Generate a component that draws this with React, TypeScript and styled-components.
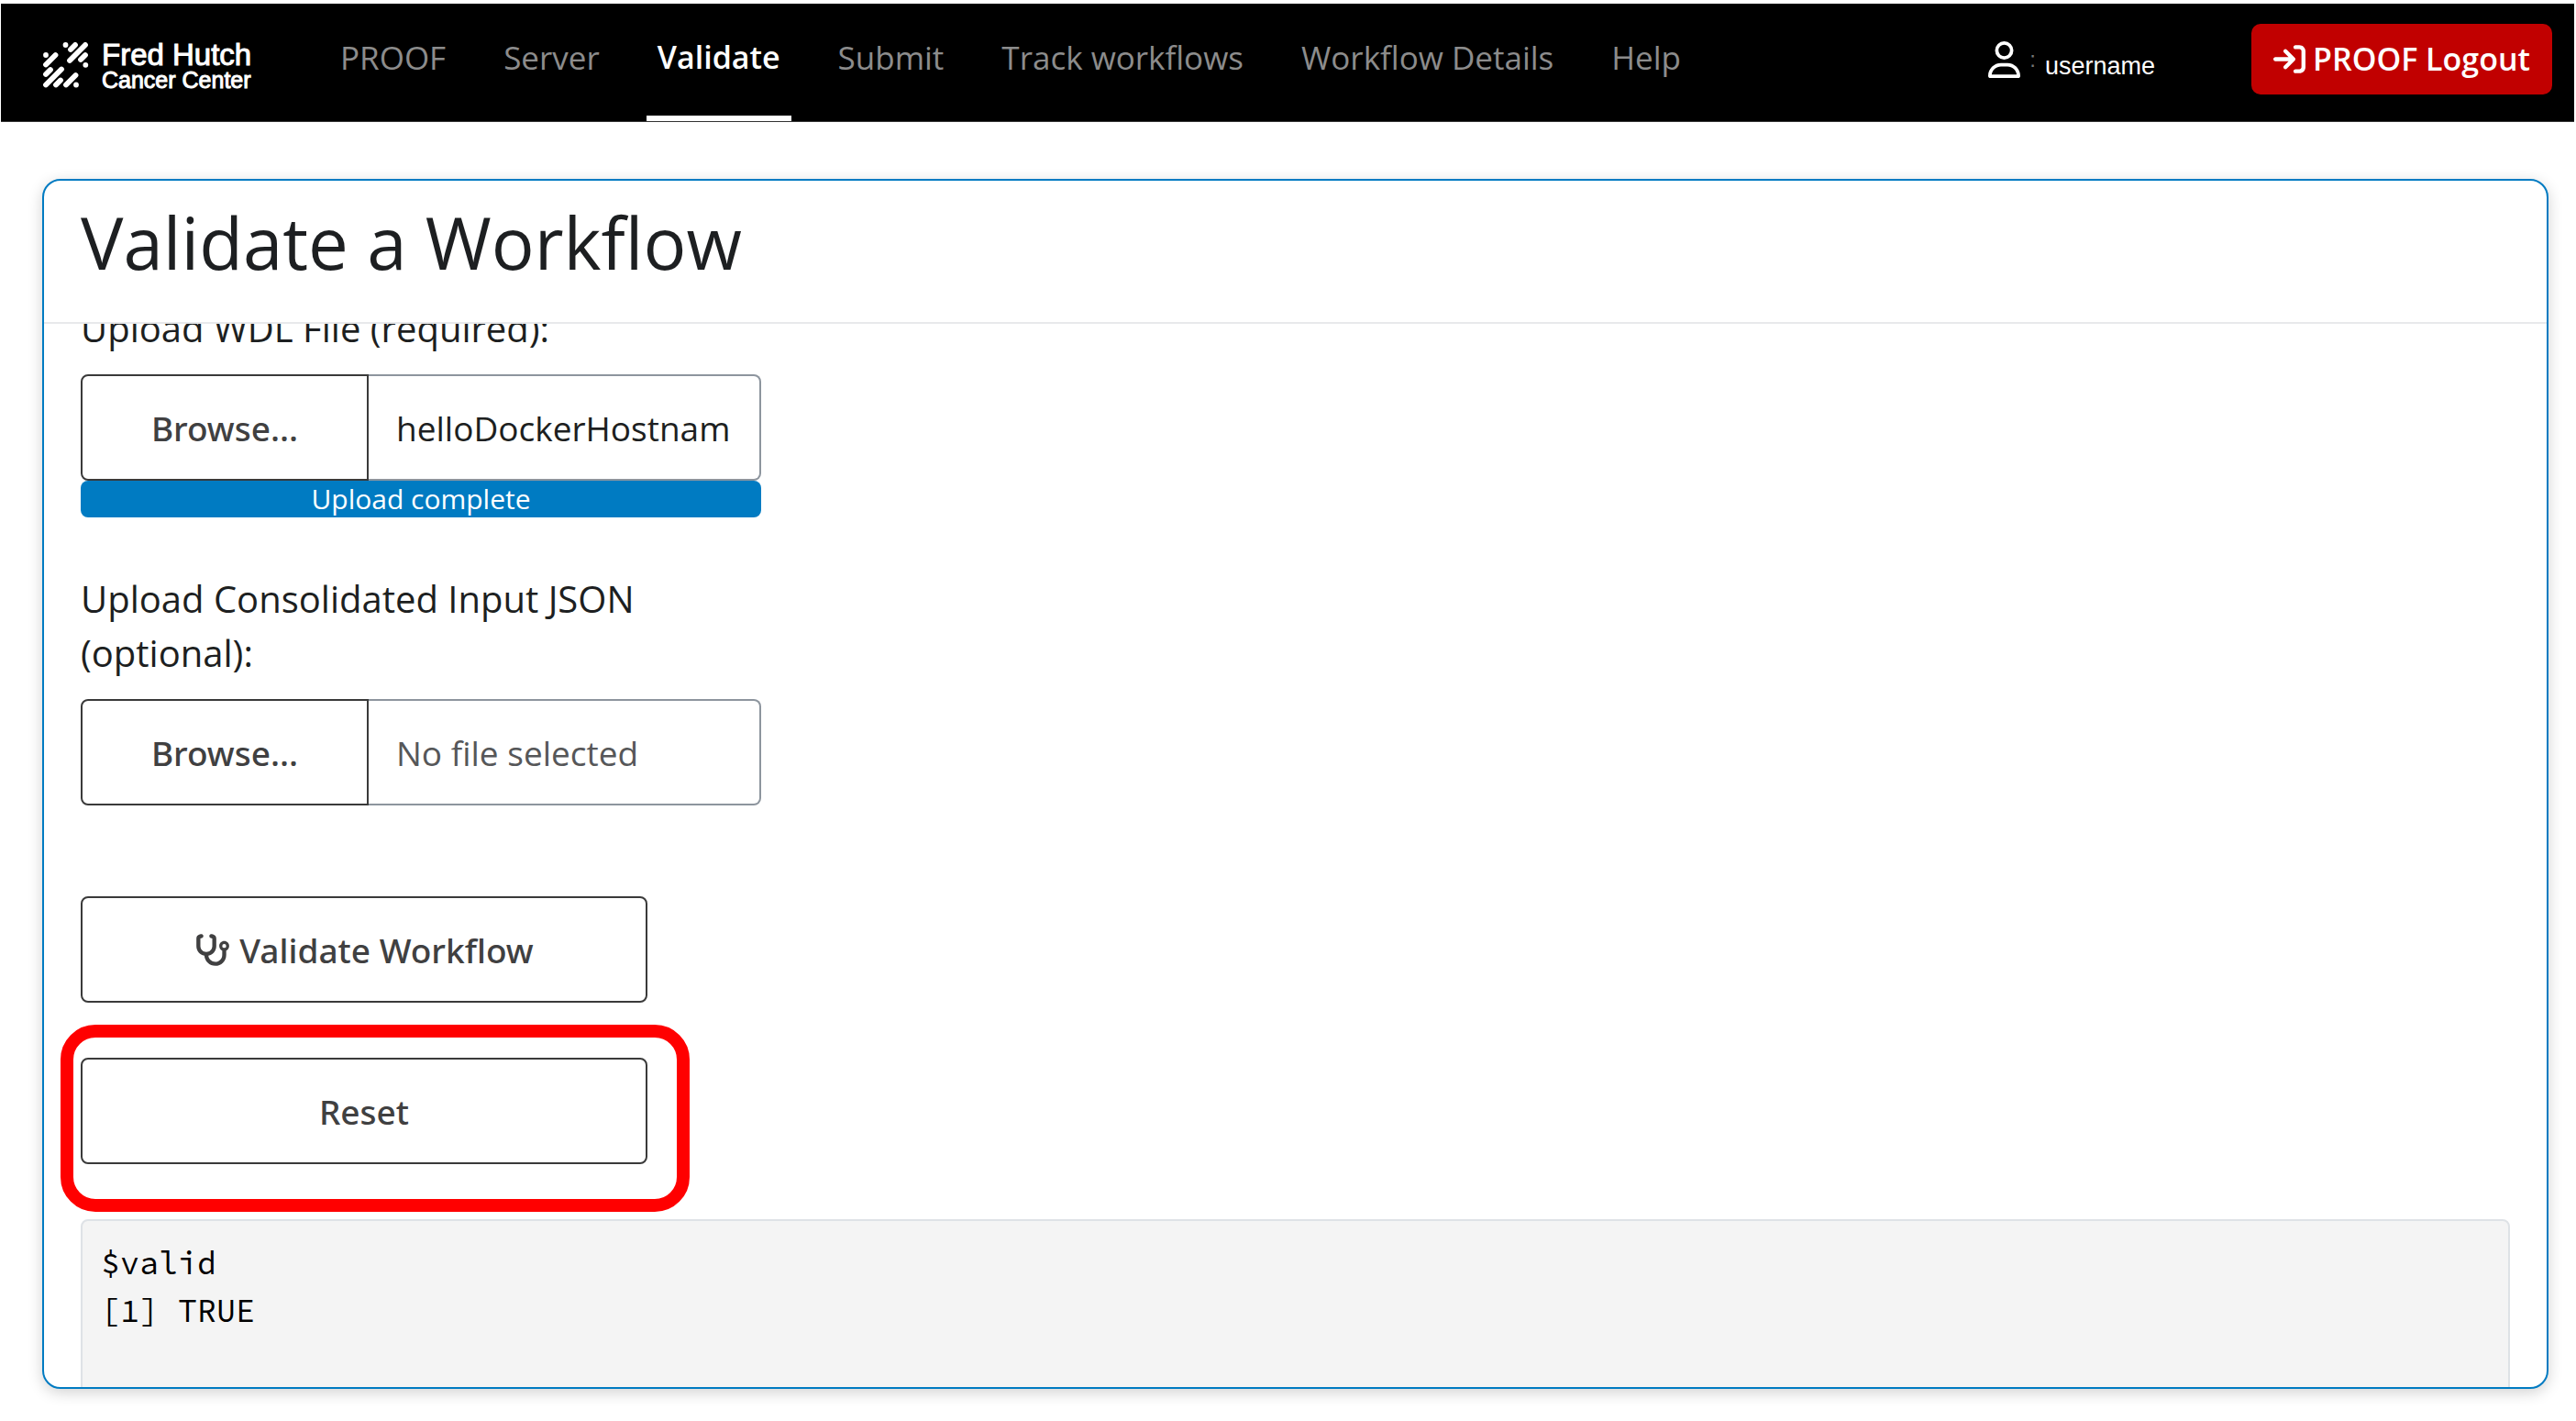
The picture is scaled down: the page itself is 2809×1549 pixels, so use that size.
import React, { useLayoutEffect, useRef } from "react";
import styled, { createGlobalStyle } from "styled-components";
import {
  FaArrowRightToBracket,
  FaRegUser,
  FaStethoscope,
} from "react-icons/fa6";

const color = {
  text: "#1d1f21",
  primary: "#007bc2",
  danger: "#c10000",
  dark: "#404041",
  outline: "#3a3a3a",
  field: "#8d959e",
};

const GlobalStyle = createGlobalStyle`
  *, *::before, *::after { box-sizing: border-box; }
  body {
    margin: 0;
    background: #fff;
    color: ${color.text};
    font-family: "Open Sans", "Noto Sans", sans-serif;
    font-size: 40px;
    line-height: 59px;
  }
  button, input { font-family: inherit; }
`;

const Page = styled.div`
  display: flex;
  flex-direction: column;
  height: 100vh;
  padding: 4px 2px 35px 1px;
`;

const TopBar = styled.header`
  display: flex;
  align-items: stretch;
  flex: none;
  background: #000;
  border-bottom: 1px solid #333;
  color: #fff;
`;

const Brand = styled.a`
  display: flex;
  align-items: flex-start;
  gap: 14px;
  width: 311px;
  padding: 39px 0 0 46px;
  color: #fff;
  text-decoration: none;
`;

const BrandMark = styled.svg`
  flex: none;
  width: 50px;
  height: 50px;
  margin-top: 3px;
`;

const BrandName = styled.span`
  display: flex;
  flex-direction: column;
  font-family: "Liberation Sans", Arial, sans-serif;
  white-space: nowrap;
  -webkit-text-stroke: 1px #fff;
`;

const BrandLine = styled.span<{ $small?: boolean }>`
  font-size: ${(p) => (p.$small ? 25 : 33)}px;
  line-height: ${(p) => (p.$small ? 20 : 34)}px;
`;

const Nav = styled.nav`
  display: flex;
  gap: 39px;
  margin-left: 47px;
`;

const NavLink = styled.a<{ $active?: boolean }>`
  padding: 32px 12px 37px;
  border-bottom: 6px solid ${(p) => (p.$active ? "#fff" : "transparent")};
  color: ${(p) => (p.$active ? "#fff" : "#8c8c8c")};
  font-size: ${(p) => (p.$active ? 34 : 35)}px;
  font-weight: ${(p) => (p.$active ? 600 : 400)};
  line-height: 53px;
  text-decoration: none;
  white-space: nowrap;
`;

const Account = styled.div`
  display: flex;
  align-items: flex-start;
  margin-left: auto;
  padding: 22px 24px 0 0;
`;

const User = styled.div`
  display: flex;
  align-items: center;
  gap: 10px;
  margin-right: 105px;
  padding-top: 12px;
  font-family: "Liberation Sans", Arial, sans-serif;
  font-size: 27px;
  line-height: 40px;

  svg {
    width: 35px;
    height: 40px;
  }
`;

const Colon = styled.span`
  color: #777;
  font-size: 24px;
`;

const UserName = styled.span`
  padding-top: 14px;
`;

const Logout = styled.button`
  display: flex;
  align-items: center;
  gap: 8px;
  padding: 12px 24px;
  border: 0;
  border-radius: 10px;
  background: ${color.danger};
  color: #fff;
  font-size: 34px;
  font-weight: 600;
  line-height: 53px;
  white-space: nowrap;

  svg {
    width: 35px;
    height: 35px;
  }
`;

const Card = styled.main`
  display: flex;
  flex: 1;
  flex-direction: column;
  min-height: 0;
  margin: 62px 28px 0 45px;
  overflow: hidden;
  border: 2px solid ${color.primary};
  border-radius: 20px;
  background: #fff;
  box-shadow: 0 4px 16px rgba(0, 0, 0, 0.18);
`;

const CardHeader = styled.div`
  flex: none;
  padding: 20px 40px 39px;
  border-bottom: 2px solid #e8e9eb;
`;

const Title = styled.h1`
  margin: 0;
  font-size: 78px;
  font-weight: 400;
  line-height: 95px;
`;

const CardBody = styled.div`
  flex: 1;
  min-height: 0;
  padding: 40px;
  overflow-y: auto;
  scrollbar-width: none;
`;

const Field = styled.div`
  width: 742px;
  margin-bottom: 59px;
`;

const FieldLabel = styled.label`
  display: block;
  margin-bottom: 21px;
`;

const FileGroup = styled.div`
  display: flex;
  height: 116px;
`;

const Browse = styled.label`
  display: flex;
  flex: none;
  align-items: center;
  justify-content: center;
  width: 314px;
  border: 2px solid ${color.outline};
  border-radius: 8px 0 0 8px;
  color: ${color.dark};
  font-family: "Noto Sans", "Open Sans", sans-serif;
  font-size: 37px;
  font-weight: 500;
`;

const HiddenFile = styled.input`
  position: absolute;
  width: 1px;
  height: 1px;
  opacity: 0;
`;

const FileName = styled.input`
  flex: 1;
  min-width: 0;
  padding: 0 30px;
  border: 2px solid ${color.field};
  border-left: 0;
  border-radius: 0 8px 8px 0;
  background: #fff;
  color: ${color.text};
  font-size: 37px;

  &::placeholder {
    color: #565759;
    opacity: 1;
  }
`;

const Progress = styled.div`
  border-radius: 8px;
  background: ${color.primary};
  color: #fff;
  font-size: 30px;
  line-height: 40px;
  text-align: center;
`;

const Actions = styled.div`
  display: flex;
  flex-direction: column;
  gap: 60px;
  width: 618px;
  margin: 99px 0 60px;
`;

const Action = styled.button`
  display: flex;
  align-items: center;
  justify-content: center;
  gap: 10px;
  width: 100%;
  height: 116px;
  border: 2px solid ${color.outline};
  border-radius: 8px;
  background: #fff;
  color: ${color.dark};
  font-family: "Noto Sans", "Open Sans", sans-serif;
  font-size: 37px;
  font-weight: 500;

  svg {
    width: 39px;
    height: 37px;
  }
`;

const Highlighted = styled.div`
  position: relative;
`;

const Marker = styled.div`
  position: absolute;
  inset: -36px -46px -52px -22px;
  border: 14px solid #f00;
  border-radius: 38px;
  pointer-events: none;
`;

const Output = styled.pre`
  min-height: 320px;
  margin: 0;
  padding: 20px;
  border: 2px solid #dee2e6;
  border-radius: 8px;
  background: #f4f4f4;
  color: #000;
  font-family: "Source Code Pro", "Liberation Mono", monospace;
  font-size: 35px;
  line-height: 52px;
`;

const dashes: [number, number, number, number][] = [
  [3, 14, 3, 14],
  [13.5, 14, 3, 24.5],
  [24.5, 3, 24.5, 3],
  [35, 3, 30, 8],
  [46, 3, 29, 20],
  [46, 14, 41, 19],
  [46.3, 24.8, 46.3, 24.8],
  [8, 30, 3, 35],
  [20, 29.5, 3, 46.5],
  [19, 41.5, 14, 46.5],
  [35.5, 36, 25, 46.5],
  [36, 46.5, 36, 46.5],
];

const pages = [
  "PROOF",
  "Server",
  "Validate",
  "Submit",
  "Track workflows",
  "Workflow Details",
  "Help",
];

type FileFieldProps = {
  id: string;
  label: string;
  value?: string;
  done?: boolean;
};

function FileField({ id, label, value = "", done }: FileFieldProps) {
  return (
    <Field>
      <FieldLabel htmlFor={`${id}-name`}>{label}</FieldLabel>
      <FileGroup>
        <Browse>
          Browse...
          <HiddenFile type="file" id={id} />
        </Browse>
        <FileName
          id={`${id}-name`}
          type="text"
          readOnly
          value={value}
          placeholder="No file selected"
        />
      </FileGroup>
      {done && <Progress>Upload complete</Progress>}
    </Field>
  );
}

export default function App() {
  const body = useRef<HTMLDivElement>(null);

  useLayoutEffect(() => {
    if (body.current) body.current.scrollTop = 65;
  }, []);

  return (
    <Page>
      <GlobalStyle />
      <TopBar>
        <Brand href="#">
          <BrandMark viewBox="0 0 50 50" aria-hidden="true">
            {dashes.map(([x1, y1, x2, y2]) => (
              <line
                key={`${x1}-${y1}`}
                x1={x1}
                y1={y1}
                x2={x1 === x2 ? x2 + 0.01 : x2}
                y2={y2}
                stroke="#fff"
                strokeWidth="5.8"
                strokeLinecap="round"
              />
            ))}
          </BrandMark>
          <BrandName>
            <BrandLine>Fred Hutch</BrandLine>
            <BrandLine $small>Cancer Center</BrandLine>
          </BrandName>
        </Brand>
        <Nav>
          {pages.map((page) => (
            <NavLink key={page} href="#" $active={page === "Validate"}>
              {page}
            </NavLink>
          ))}
        </Nav>
        <Account>
          <User>
            <FaRegUser />
            <Colon>:</Colon>
            <UserName>username</UserName>
          </User>
          <Logout type="button">
            <FaArrowRightToBracket />
            PROOF Logout
          </Logout>
        </Account>
      </TopBar>
      <Card>
        <CardHeader>
          <Title>Validate a Workflow</Title>
        </CardHeader>
        <CardBody ref={body}>
          <FileField
            id="wdl"
            label="Upload WDL File (required):"
            value="helloDockerHostnam"
            done
          />
          <FileField
            id="json"
            label="Upload Consolidated Input JSON (optional):"
          />
          <Actions>
            <Action type="button">
              <FaStethoscope />
              Validate Workflow
            </Action>
            <Highlighted>
              <Action type="button">Reset</Action>
              <Marker />
            </Highlighted>
          </Actions>
          <Output>{"$valid\n[1] TRUE\n"}</Output>
        </CardBody>
      </Card>
    </Page>
  );
}
